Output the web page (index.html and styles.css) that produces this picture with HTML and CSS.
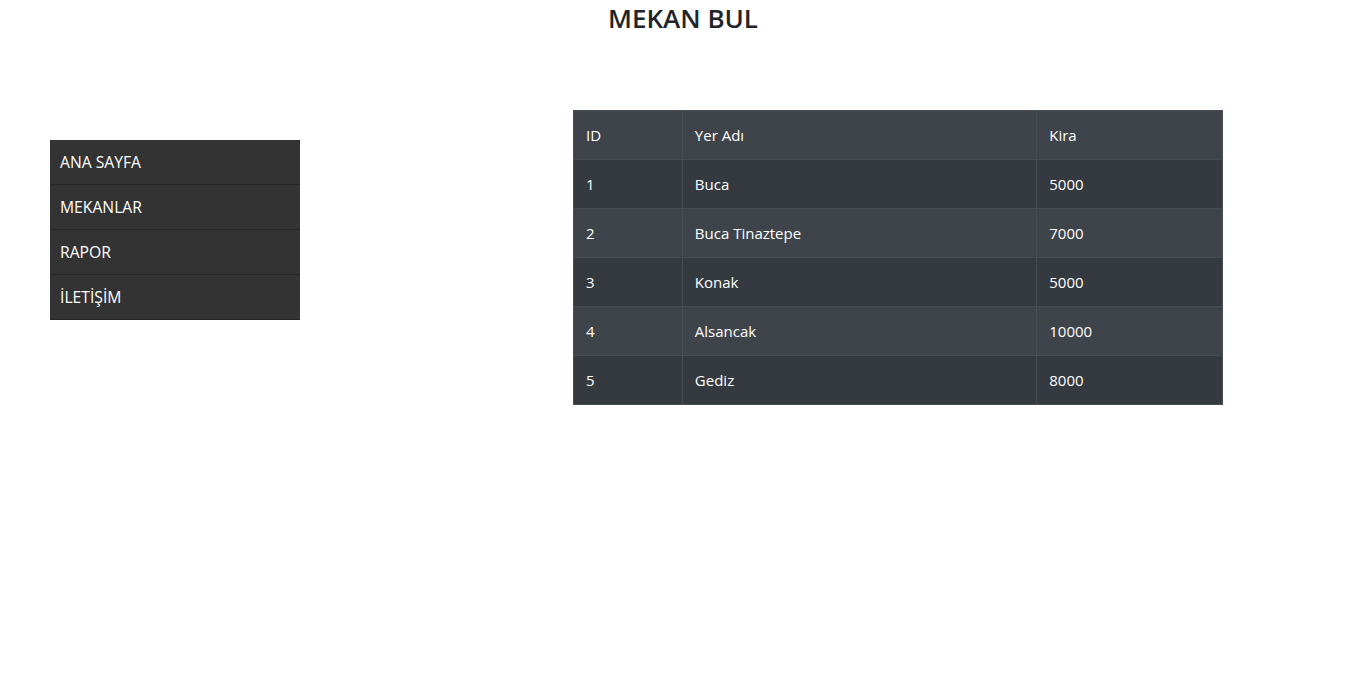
FILE: index.html
```
<!DOCTYPE html>
<html lang="tr">
<head>
<meta charset="utf-8">
<title>Mekan Bul</title>
<link rel="stylesheet" href="styles.css">
</head>
<body>
<h3 class="title">MEKAN BUL</h3>
<div class="layout">
  <nav class="sidebar">
    <a class="nav-item" href="#">ANA SAYFA</a>
    <a class="nav-item" href="#">MEKANLAR</a>
    <a class="nav-item" href="#">RAPOR</a>
    <a class="nav-item" href="#">İLETİŞİM</a>
  </nav>
  <div class="content">
    <table class="table">
      <tbody>
        <tr><td class="c1">ID</td><td class="c2">Yer Adı</td><td class="c3">Kira</td></tr>
        <tr><td>1</td><td>Buca</td><td>5000</td></tr>
        <tr><td>2</td><td>Buca Tinaztepe</td><td>7000</td></tr>
        <tr><td>3</td><td>Konak</td><td>5000</td></tr>
        <tr><td>4</td><td>Alsancak</td><td>10000</td></tr>
        <tr><td>5</td><td>Gediz</td><td>8000</td></tr>
      </tbody>
    </table>
  </div>
</div>
</body>
</html>
```
FILE: styles.css
```
* { box-sizing: border-box; }
html, body { margin: 0; padding: 0; background: #fff; }
body {
  font-family: "Open Sans", "Noto Sans", "Liberation Sans", sans-serif;
  font-size: 16px;
  line-height: 1.5;
  color: #212529;
}
.title {
  margin: 0;
  padding-top: 2px;
  text-align: center;
  font-size: 26px;
  font-weight: 600;
  line-height: 32px;
  padding-left: 5px;
}
.layout {
  display: flex;
  align-items: flex-start;
  padding-top: 76px;
}
.sidebar {
  margin-left: 50px;
  margin-top: 30px;
  width: 250px;
  display: flex;
  flex-direction: column;
  background: #333333;
}
.nav-item {
  display: block;
  height: 45px;
  padding: 10px 10px;
  line-height: 24px;
  font-size: 15.7px;
  color: #ffffff;
  text-decoration: none;
  border-bottom: 1px solid #262626;
}
.content {
  margin-left: 273px;
}
.table {
  width: 650px;
  border-collapse: collapse;
  color: #ffffff;
  background: #343a40;
  font-size: 15px;
}
.table td {
  border: 1px solid #454d55;
  padding: 12px 12px;
  line-height: 24px;
  height: 49px;
}
.table tr:nth-child(odd) { background: #3f444a; }
.c1 { width: 109px; }
.c2 { width: 355px; }
.c3 { width: 186px; }
```
